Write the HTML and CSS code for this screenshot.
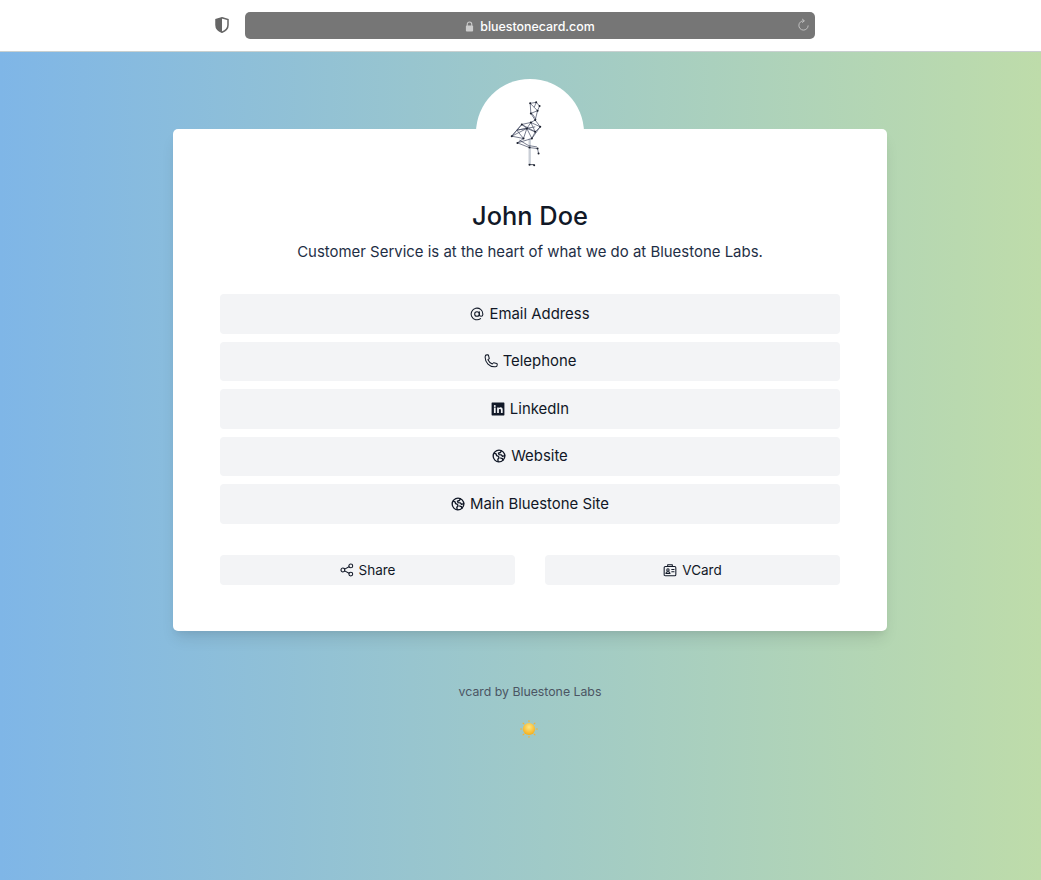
FILE: index.html
```html
<!DOCTYPE html>
<html>
<head>
  <meta charset="UTF-8" />
  <title>John Doe - vcard</title>
  <link rel="stylesheet" href="styles.css">
</head>
<body>
<div class="topbar">
  <svg class="shield" viewBox="0 0 14 16" width="14" height="16">
    <path d="M7 .8 13 2.6V8c0 3.4-2.6 5.9-6 7.2C3.600 13.900 1 11.400 1 8V2.600Z" fill="#fff" stroke="#666" stroke-width="1.500"/>
    <path d="M7 .8 1 2.600V8c0 3.400 2.600 5.900 6 7.200Z" fill="#666"/>
  </svg>
  <div class="urlbar">
    <span class="url">
      <svg viewBox="0 0 10 12" width="9" height="11">
        <path d="M2.500 5.500V3.500a2.500 2.500 0 0 1 5 0v2" fill="none" stroke="#ccc" stroke-width="1.200"/>
        <rect x="1" y="5" width="8" height="6.500" rx="1" fill="#ccc"/>
      </svg>
      bluestonecard.com
    </span>
    <svg class="reload" viewBox="0 0 14 14" width="13" height="14">
      <path d="M7.500 2.500A5 5 0 1 0 12 7.500" fill="none" stroke="#c4c4c4" stroke-width="1"/>
      <path d="M5.500 .5 8 2.500 5.500 4.500" fill="none" stroke="#c4c4c4" stroke-width="1"/>
    </svg>
  </div>
</div>

<div class="main">
  <div class="card">
    <div class="avatar">
      <!-- flamingo -->
      <svg class="bird" viewBox="150 90 95 200" width="32" height="67">
        <path d="M205 205h7v78h-7z" fill="#c9ced6"/>
        <g fill="none" stroke="#39405a" stroke-width="2">
          <path d="M210 100 228 97 238 108 232 122 222 112 210 100 212 130 225 150 240 170 212 157 185 163 155 198 170 180 200 175 225 185 240 170"/>
          <path d="M212 130 232 122 225 150 212 157 200 175 185 163 170 180 190 205 200 175 215 205 225 185 212 157"/>
          <path d="M155 198 190 205 172 218 215 205M172 218 208 232 232 235 235 250M178 210 205 226 230 230M228 97 222 112M215 130 228 148"/>
          <path d="M185 163 225 185M170 180 225 170M155 198 200 175M240 170 215 205"/>
        </g>
        <path d="M208 283h14" stroke="#2a3040" stroke-width="2.500"/>
        <g fill="#1a1f2c">
          <circle cx="210" cy="100" r="3"/><circle cx="228" cy="97" r="3"/><circle cx="238" cy="108" r="3"/>
          <circle cx="232" cy="122" r="3"/><circle cx="212" cy="130" r="3"/><circle cx="225" cy="150" r="3"/>
          <circle cx="240" cy="170" r="3"/><circle cx="185" cy="163" r="3"/><circle cx="212" cy="157" r="3"/>
          <circle cx="155" cy="198" r="3"/><circle cx="200" cy="175" r="3"/><circle cx="225" cy="185" r="3"/>
          <circle cx="190" cy="205" r="3"/><circle cx="215" cy="205" r="3"/><circle cx="172" cy="218" r="3"/>
          <circle cx="208" cy="232" r="3"/><circle cx="232" cy="235" r="3"/><circle cx="235" cy="250" r="3"/>
          <circle cx="208" cy="283" r="3"/><circle cx="222" cy="285" r="3"/>
        </g>
      </svg>
    </div>
    <h1 class="name">John Doe</h1>
    <p class="tagline">Customer Service is at the heart of what we do at Bluestone Labs.</p>

    <div class="links">
      <a class="btn">
        <svg class="icon" viewBox="0 0 24 24"><circle cx="12" cy="12" r="4" /><path d="M16 8v5a3 3 0 0 0 6 0v-1a10 10 0 1 0-3.900 7.900"/></svg>
        Email Address
      </a>
      <a class="btn">
        <svg class="icon" viewBox="0 0 24 24"><path d="M2 4.500C2 2.800 3.300 1.500 5 1.500h1.700c.5 0 .9.3 1 .8l1.300 5c.1.400 0 .8-.4 1L6.800 9.800c1.500 3.300 4 5.800 7.400 7.400l1.500-1.800c.3-.4.700-.5 1.100-.4l5 1.300c.5.100.8.500.8 1V19c0 1.700-1.300 3-3 3h-1.600C9.500 22 2 14.500 2 6Z"/></svg>
        Telephone
      </a>
      <a class="btn">
        <svg class="icon icon-solid" viewBox="0 0 24 24"><path fill-rule="evenodd" d="M2 1h20a1 1 0 0 1 1 1v20a1 1 0 0 1-1 1H2a1 1 0 0 1-1-1V2a1 1 0 0 1 1-1ZM5 9.500V19h3V9.500ZM6.500 5a1.700 1.700 0 1 0 0 3.400 1.700 1.700 0 0 0 0-3.400ZM10.500 9.500V19h3v-5c0-1.500.7-2.200 1.800-2.200s1.700.7 1.700 2.200v5h3v-5.800c0-2.700-1.500-4-3.600-4-1.400 0-2.400.6-2.900 1.500V9.500Z"/></svg>
        LinkedIn
      </a>
      <a class="btn">
        <svg class="icon icon-globe" viewBox="0 0 24 24"><circle cx="12" cy="12" r="10"/><path d="M3.500 7 7 8.500l1 3 3 1 1 3-2 2 .5 4M16 3 14.500 6 11 7l1 2.500 4 .5 2 2.500 3.800-1M15 15.500l3 1 .5 3"/></svg>
        Website
      </a>
      <a class="btn">
        <svg class="icon icon-globe" viewBox="0 0 24 24"><circle cx="12" cy="12" r="10"/><path d="M3.500 7 7 8.500l1 3 3 1 1 3-2 2 .5 4M16 3 14.500 6 11 7l1 2.500 4 .5 2 2.500 3.800-1M15 15.500l3 1 .5 3"/></svg>
        Main Bluestone Site
      </a>
    </div>

    <div class="actions">
      <a class="btn btn-small">
        <svg class="icon" viewBox="0 0 24 24"><circle cx="5" cy="12" r="3.300"/><circle cx="18.500" cy="5" r="3.300"/><circle cx="18.500" cy="19" r="3.300"/><path d="M8 10.500 15.500 6.500M8 13.500l7.500 4"/></svg>
        Share
      </a>
      <a class="btn btn-small">
        <svg class="icon" viewBox="0 0 24 24"><rect x="2" y="6" width="20" height="16" rx="2"/><path d="M8 6V3h8v3"/><circle cx="8.500" cy="12" r="2"/><path d="M5 18c0-4 7-4 7 0zM15 11h4M15 15h4"/></svg>
        VCard
      </a>
    </div>
  </div>

  <p class="credit">vcard by Bluestone Labs</p>
  <svg class="sun" viewBox="0 0 20 20" width="18" height="18">
    <defs>
      <radialGradient id="sunfill" cx="50%" cy="35%" r="65%">
        <stop offset="0" stop-color="#ffe680"/>
        <stop offset="1" stop-color="#f5ae1a"/>
      </radialGradient>
    </defs>
    <g stroke="#f5b335" stroke-width="1.300" stroke-linecap="round">
      <path d="M10 .7v1.200M10 18.100v1.200M.7 10h1.200M18.100 10h1.200M3.400 3.400l.9.9M15.700 15.700l.9.9M3.400 16.600l.9-.9M15.700 4.300l.9-.9"/>
    </g>
    <circle cx="10" cy="10" r="6.800" fill="url(#sunfill)"/>
  </svg>
</div>
</body>
</html>
```

FILE: styles.css
```css
* {
  box-sizing: border-box;
}

html, body {
  height: 100%;
}

body {
  margin: 0;
  display: flex;
  flex-direction: column;
  font-family: Inter, "Liberation Sans", sans-serif;
  color: #111827;
}

.topbar {
  height: 52px;
  flex: none;
  background-color: #fff;
  border-bottom: 1px solid #c9d0d0;
  padding: 12px 226px 0 215px;
  display: flex;
  align-items: flex-start;
}

.shield {
  margin: 5px 16px 0 0;
}

.urlbar {
  flex: 1;
  height: 27px;
  border-radius: 5px;
  background-color: #767676;
  position: relative;
  display: flex;
  align-items: center;
  justify-content: center;
  padding-top: 1px;
}

.url {
  display: flex;
  align-items: center;
  gap: 6px;
  color: #fff;
  font-size: 12.400px;
  font-weight: 500;
}

.reload {
  position: absolute;
  right: 5px;
  top: 6px;
}

.main {
  flex: 1;
  background: linear-gradient(to right, #7fb6e7, #bedcaa);
  padding-top: 77px;
  display: flex;
  flex-direction: column;
  align-items: center;
}

.card {
  width: 714px;
  height: 502px;
  margin-left: 19px;
  background-color: #fff;
  border-radius: 5px;
  box-shadow: 0 10px 15px -3px rgba(0, 0, 0, .1), 0 4px 6px -2px rgba(0, 0, 0, .05);
  padding: 71px 47px 0;
  position: relative;
}

.avatar {
  position: absolute;
  left: 303px;
  top: -50px;
  width: 108px;
  height: 108px;
  border-radius: 50%;
  background-color: #fff;
  display: flex;
  justify-content: center;
  padding-top: 21px;
}

.bird {
  margin-right: 8px;
}

.name {
  margin: 0;
  text-align: center;
  font-size: 25.400px;
  line-height: 32px;
  font-weight: 500;
}

.tagline {
  margin: 9px 0 0;
  text-align: center;
  font-size: 14.950px;
  line-height: 22px;
  color: #1f2f46;
}

.links {
  margin-top: 31px;
  display: flex;
  flex-direction: column;
  gap: 8px;
}

.btn {
  height: 39.500px;
  display: flex;
  align-items: center;
  justify-content: center;
  gap: 5px;
  background-color: #f3f4f6;
  border-radius: 4px;
  font-size: 14.900px;
  color: #111827;
}

.icon {
  width: 14px;
  height: 14px;
  fill: none;
  stroke: #111827;
  stroke-width: 1.800;
  stroke-linecap: round;
  stroke-linejoin: round;
}

.icon-solid {
  fill: #111827;
  stroke: none;
}

.icon-globe {
  stroke-width: 2.300;
}

.actions {
  margin-top: 31px;
  display: grid;
  grid-template-columns: 1fr 1fr;
  gap: 30px;
}

.btn-small {
  height: 30px;
  font-size: 13.500px;
}

.credit {
  margin: 52px 0 0;
  font-size: 12.300px;
  line-height: 18px;
  color: #4b5563;
  padding-left: 19px;
}

.sun {
  margin: 19px 0 0 17px;
}
```
